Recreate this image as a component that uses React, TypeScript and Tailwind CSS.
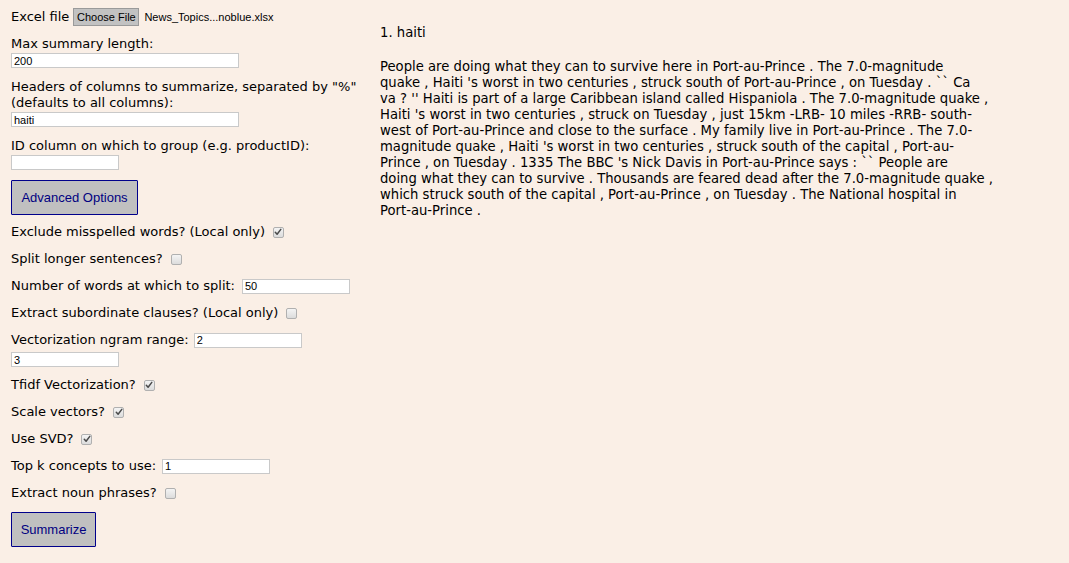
import React from "react";

const font = "font-['DejaVu_Sans',sans-serif]";

function TextInput({ value, w }: { value: string; w: string }) {
  return (
    <input
      readOnly
      value={value}
      className={`${w} h-[15px] bg-white border border-[#c9c9c9] px-[2px] text-[11px] leading-[13px] text-black font-['Liberation_Sans',Arial,sans-serif] outline-none`}
    />
  );
}

function Check({ on }: { on?: boolean }) {
  return (
    <span className="inline-flex w-[11px] h-[11px] rounded-[2px] border border-[#b0b0b0] bg-gradient-to-b from-[#f4f4f4] to-[#dcdcdc] items-center justify-center ml-[8px]">
      {on && (
        <svg width="8" height="8" viewBox="0 0 8 8">
          <path d="M1.3 4.2 L3.1 6.2 L6.8 1.4" fill="none" stroke="#4a4a4a" strokeWidth="1.5" strokeLinecap="round" strokeLinejoin="round" />
        </svg>
      )}
    </span>
  );
}

function CheckRow({ label, on, mt }: { label: string; on?: boolean; mt: string }) {
  return (
    <div className={`flex items-center h-[16px] ${mt}`}>
      <span>{label}</span>
      <Check on={on} />
    </div>
  );
}

function InputRow({ label, value, mt, ml }: { label: string; value: string; mt: string; ml: string }) {
  return (
    <div className={`flex items-center h-[16px] ${mt}`}>
      <span>{label}</span>
      <span className={`${ml} flex`}>
        <TextInput value={value} w="w-[108px]" />
      </span>
    </div>
  );
}

function NavyButton({ label, w }: { label: string; w: string }) {
  return (
    <button
      className={`${w} h-[35px] bg-[#c0c0c0] border border-[#00008b] text-[#000080] text-[13px] font-['Liberation_Sans',Arial,sans-serif] rounded-[1px]`}
    >
      {label}
    </button>
  );
}

const lines = [
  "People are doing what they can to survive here in Port-au-Prince . The 7.0-magnitude",
  "quake , Haiti 's worst in two centuries , struck south of Port-au-Prince , on Tuesday . `` Ca",
  "va ? '' Haiti is part of a large Caribbean island called Hispaniola . The 7.0-magnitude quake ,",
  "Haiti 's worst in two centuries , struck on Tuesday , just 15km -LRB- 10 miles -RRB- south-",
  "west of Port-au-Prince and close to the surface . My family live in Port-au-Prince . The 7.0-",
  "magnitude quake , Haiti 's worst in two centuries , struck south of the capital , Port-au-",
  "Prince , on Tuesday . 1335 The BBC 's Nick Davis in Port-au-Prince says : `` People are",
  "doing what they can to survive . Thousands are feared dead after the 7.0-magnitude quake ,",
  "which struck south of the capital , Port-au-Prince , on Tuesday . The National hospital in",
  "Port-au-Prince .",
];

export default function App() {
  return (
    <div className={`min-h-[563px] w-full bg-[#faefe6] text-[13px] leading-[16px] text-black ${font} flex`}>
      <div className="w-[369px] pl-[11px] pt-[8px] flex flex-col items-start">
        <div className="flex items-center h-[18px]">
          <span className="text-[13px]">Excel file</span>
          <span className="ml-[4px] h-[18px] w-[66px] text-center bg-[#c2c2c2] border border-[#9a9a9a] text-[11px] leading-[16px] font-['Liberation_Sans',Arial,sans-serif] text-black">
            Choose File
          </span>
          <span className="ml-[5px] text-[11px] font-['Liberation_Sans',Arial,sans-serif]">News_Topics...noblue.xlsx</span>
        </div>

        <div className="mt-[10px] h-[16px]">Max summary length:</div>
        <div className="mt-[1px] flex">
          <TextInput value="200" w="w-[228px]" />
        </div>

        <div className="mt-[11px]">
          Headers of columns to summarize, separated by "%"
          <br />
          (defaults to all columns):
        </div>
        <div className="mt-[1px] flex">
          <TextInput value="haiti" w="w-[228px]" />
        </div>

        <div className="mt-[11px] h-[16px]">ID column on which to group (e.g. productID):</div>
        <div className="mt-[1px] flex">
          <TextInput value="" w="w-[108px]" />
        </div>

        <div className="mt-[10px] flex">
          <NavyButton label="Advanced Options" w="w-[127px]" />
        </div>

        <CheckRow label="Exclude misspelled words? (Local only)" on mt="mt-[9px]" />
        <CheckRow label="Split longer sentences?" mt="mt-[11px]" />
        <InputRow label="Number of words at which to split:" value="50" mt="mt-[11px]" ml="ml-[7px]" />
        <CheckRow label="Extract subordinate clauses? (Local only)" mt="mt-[11px]" />
        <InputRow label="Vectorization ngram range:" value="2" mt="mt-[11px]" ml="ml-[5px]" />
        <div className="mt-[4px] flex">
          <TextInput value="3" w="w-[108px]" />
        </div>
        <CheckRow label="Tfidf Vectorization?" on mt="mt-[10px]" />
        <CheckRow label="Scale vectors?" on mt="mt-[11px]" />
        <CheckRow label="Use SVD?" on mt="mt-[11px]" />
        <InputRow label="Top k concepts to use:" value="1" mt="mt-[11px]" ml="ml-[6px]" />
        <CheckRow label="Extract noun phrases?" mt="mt-[11px]" />

        <div className="mt-[11px] flex">
          <NavyButton label="Summarize" w="w-[85px]" />
        </div>
      </div>

      <div className="pl-[11px] pt-[25px] text-[13.2px]">
        <div className="h-[16px]">1. haiti</div>
        <p className="mt-[18px] whitespace-nowrap">
          {lines.map((l, i) => (
            <React.Fragment key={i}>
              {l}
              {i < lines.length - 1 && <br />}
            </React.Fragment>
          ))}
        </p>
      </div>
    </div>
  );
}
